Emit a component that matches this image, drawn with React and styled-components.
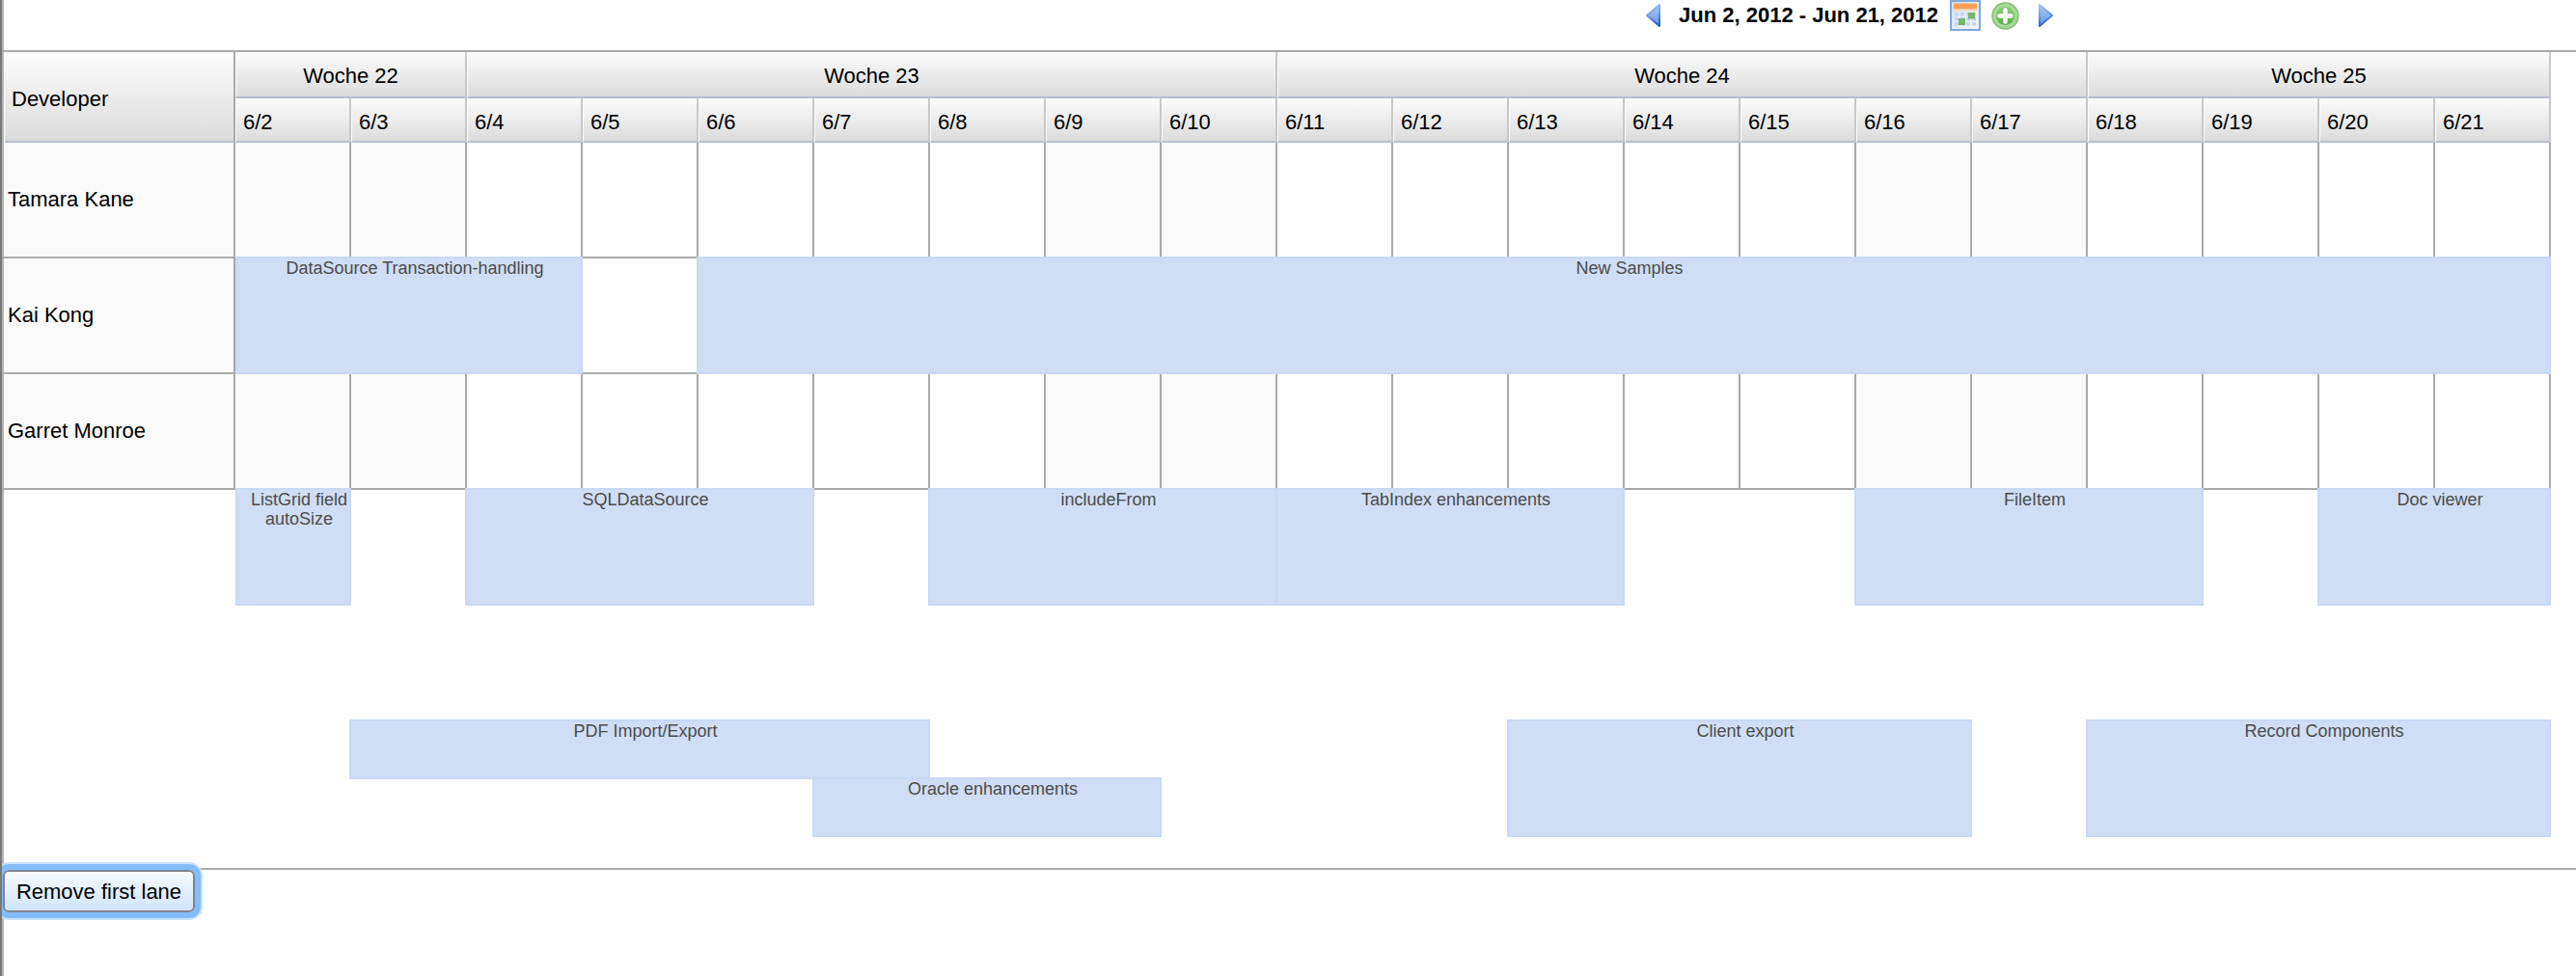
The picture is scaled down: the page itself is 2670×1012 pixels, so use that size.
import React from "react";
import styled, { createGlobalStyle } from "styled-components";

const Global = createGlobalStyle`
  html, body { margin: 0; padding: 0; background: #fff; }
  body { font-family: "Liberation Sans", Arial, sans-serif; color: #000; }
  * { box-sizing: border-box; }
`;

const Page = styled.div`
  height: 1012px;
  overflow: hidden;
  border-left: 2px solid #777;
  box-shadow: inset 2px 0 0 #b4b4b4;
  background: #fff;
`;

const Toolbar = styled.div`
  display: flex;
  align-items: center;
  height: 52px;
  padding: 0 0 20px 1704px;
`;

const Range = styled.span`
  margin: 0 12px 0 19px;
  font-size: 22px;
  font-weight: 700;
  line-height: 32px;
  white-space: nowrap;
`;

const IconSvg = styled.svg`
  display: block;
  flex: none;
  margin-left: ${(p) => p.$gap || 0}px;
`;

const Chart = styled.div`
  display: grid;
  grid-template-columns: 242px repeat(20, 120px);
  grid-template-rows: 48px 46px repeat(3, 120px) 120px 120px 60px 60px;
  border-top: 2px solid #aaa;
  border-bottom: 2px solid #aaa;
  padding-bottom: 32px;
`;

const HeaderCell = styled.div`
  display: flex;
  align-items: center;
  background: linear-gradient(#fcfcfc, #dcdcdc);
  border-left: 1px solid #fafafa;
  border-right: 2px solid #c8c8c8;
  border-bottom: 2px solid #b7bfcb;
  font-size: 22px;
  line-height: 26px;
  white-space: nowrap;
`;

const DeveloperHeader = styled(HeaderCell)`
  grid-column: 1;
  grid-row: 1 / span 2;
  margin-left: 3px;
  padding: 6px 0 0 7px;
  border-left: 0;
  border-right: 2px solid #aaa;
`;

const WeekHeader = styled(HeaderCell)`
  grid-column: ${(p) => p.$start + 2} / span ${(p) => p.$span};
  grid-row: 1;
  justify-content: center;
  padding-top: 4px;
`;

const DayHeader = styled(HeaderCell)`
  grid-column: ${(p) => p.$col + 2};
  grid-row: 2;
  padding: 6px 0 0 7px;
`;

const LaneName = styled.div`
  grid-column: 1;
  grid-row: ${(p) => p.$row + 3};
  display: flex;
  align-items: center;
  padding: 0 0 0 4px;
  background: #fafafa;
  border-left: 2px solid #b4b4b4;
  border-right: 2px solid #aaa;
  border-bottom: 2px solid #aaa;
  font-size: 22px;
  line-height: 26px;
`;

const Cell = styled.div`
  grid-column: ${(p) => p.$col + 2};
  grid-row: ${(p) => p.$row + 3};
  background: ${(p) => (p.$weekend ? "#fafafa" : "#fff")};
  border-right: 2px solid #aaa;
  border-bottom: 2px solid #aaa;
`;

const EventBox = styled.div`
  grid-column: ${(p) => p.$start + 2} / span ${(p) => p.$span};
  grid-row: ${(p) => p.$row + 3};
  margin-top: -2px;
  margin-left: ${(p) => (p.$start === 0 ? 0 : -2)}px;
  padding-left: 12px;
  background: #cfdef5;
  border: 2px solid #c8d9f3;
  color: #4b4b4b;
  font-size: 18px;
  line-height: 20px;
  text-align: center;
`;

const TallEvent = styled(EventBox)`
  grid-row: ${(p) => p.$row + 3} / span 2;
`;

const Footer = styled.div`
  display: flex;
  padding-left: 1px;
`;

const RemoveButton = styled.button`
  width: 199px;
  height: 44px;
  padding: 2px 0 0;
  border: 2px solid #7f868e;
  border-radius: 6px;
  background: linear-gradient(#f6fbff, #cfe5fe);
  box-shadow: 0 0 0 6px #83bdfc, 0 0 0 8px #c7e1fd;
  color: #000;
  font-family: "Liberation Sans", Arial, sans-serif;
  font-size: 22px;
  line-height: 26px;
  white-space: nowrap;
`;

const Arrow = ({ dir, gap, id }) => (
  <IconSvg $gap={gap} width="15" height="24" viewBox="0 0 15 24">
    <defs>
      <linearGradient id={id} x1="0" y1="0" x2="0" y2="1">
        <stop offset="0" stopColor="#b4cdf1" />
        <stop offset="1" stopColor="#5f94e2" />
      </linearGradient>
      <linearGradient id={`${id}Edge`} x1="0" y1="0" x2="0.2" y2="1">
        <stop offset="0" stopColor="#a5c3ee" />
        <stop offset="0.5" stopColor="#6f9fe6" />
        <stop offset="1" stopColor="#2462c2" />
      </linearGradient>
    </defs>
    <path
      d={dir === "left" ? "M14 1 L14 23 L1 12 Z" : "M1 1 L1 23 L14 12 Z"}
      fill={`url(#${id})`}
      stroke={`url(#${id}Edge)`}
      strokeWidth="2"
      strokeLinejoin="round"
    />
  </IconSvg>
);

const CalendarIcon = () => (
  <IconSvg width="32" height="32" viewBox="0 0 32 32">
    <defs>
      <linearGradient id="calFill" x1="0" y1="0" x2="1" y2="1">
        <stop offset="0" stopColor="#cfe0f6" />
        <stop offset="1" stopColor="#f4f8fd" />
      </linearGradient>
    </defs>
    <rect x="1" y="1" width="30" height="30" fill="url(#calFill)" stroke="#7fa8dd" strokeWidth="2" />
    <rect x="4" y="3.5" width="24" height="6" fill="#f99f5a" />
    <rect x="4" y="9.5" width="24" height="2" fill="#fbd6b5" />
    {[13, 18, 23].map((y) =>
      [5, 11, 17, 23].map((x) => (
        <rect key={`${x}-${y}`} x={x} y={y} width="4" height="3.5" fill="#c4d6ee" />
      ))
    )}
    <rect x="9" y="19" width="7" height="7" fill="#78b568" />
    <rect x="19" y="13" width="7" height="6.5" fill="#78b568" />
  </IconSvg>
);

const PlusIcon = () => (
  <IconSvg $gap={11} width="29" height="29" viewBox="0 0 29 29">
    <defs>
      <linearGradient id="plusFill" x1="0" y1="0" x2="0" y2="1">
        <stop offset="0" stopColor="#8ccf7a" />
        <stop offset="1" stopColor="#5cab4e" />
      </linearGradient>
    </defs>
    <circle cx="14.5" cy="14.5" r="13.5" fill="#a7d79a" stroke="#84be76" strokeWidth="1.5" />
    <circle cx="14.5" cy="14.5" r="9.5" fill="url(#plusFill)" />
    <path d="M14.5 8.5v12M8.5 14.5h12" stroke="#fff" strokeWidth="4.4" strokeLinecap="round" />
  </IconSvg>
);

const weeks = [
  { label: "Woche 22", start: 0, span: 2 },
  { label: "Woche 23", start: 2, span: 7 },
  { label: "Woche 24", start: 9, span: 7 },
  { label: "Woche 25", start: 16, span: 4 },
];
const days = Array.from({ length: 20 }, (_, i) => `6/${i + 2}`);
const weekend = new Set([0, 1, 7, 8, 14, 15]);
const lanes = ["Tamara Kane", "Kai Kong", "Garret Monroe"];

const events = [
  { label: "DataSource Transaction-handling", row: 1, start: 0, span: 3 },
  { label: "New Samples", row: 1, start: 4, span: 16 },
  { label: "ListGrid field autoSize", row: 3, start: 0, span: 1 },
  { label: "SQLDataSource", row: 3, start: 2, span: 3 },
  { label: "includeFrom", row: 3, start: 6, span: 3 },
  { label: "TabIndex enhancements", row: 3, start: 9, span: 3 },
  { label: "FileItem", row: 3, start: 14, span: 3 },
  { label: "Doc viewer", row: 3, start: 18, span: 2 },
  { label: "PDF Import/Export", row: 5, start: 1, span: 5 },
  { label: "Oracle enhancements", row: 6, start: 5, span: 3 },
  { label: "Client export", row: 5, rowSpan: 2, start: 11, span: 4 },
  { label: "Record Components", row: 5, rowSpan: 2, start: 16, span: 4 },
];

export default function App() {
  return (
    <Page>
      <Global />
      <Toolbar>
        <Arrow dir="left" id="arrowLeft" />
        <Range>Jun 2, 2012 - Jun 21, 2012</Range>
        <CalendarIcon />
        <PlusIcon />
        <Arrow dir="right" gap={20} id="arrowRight" />
      </Toolbar>
      <Chart>
        <DeveloperHeader>Developer</DeveloperHeader>
        {weeks.map((w) => (
          <WeekHeader key={w.label} $start={w.start} $span={w.span}>
            {w.label}
          </WeekHeader>
        ))}
        {days.map((d, i) => (
          <DayHeader key={d} $col={i}>
            {d}
          </DayHeader>
        ))}
        {lanes.map((name, row) => (
          <React.Fragment key={name}>
            <LaneName $row={row}>{name}</LaneName>
            {days.map((d, col) => (
              <Cell key={d} $row={row} $col={col} $weekend={weekend.has(col)} />
            ))}
          </React.Fragment>
        ))}
        {events.map((e) => {
          const Box = e.rowSpan ? TallEvent : EventBox;
          return (
            <Box key={e.label} $row={e.row} $start={e.start} $span={e.span}>
              {e.label}
            </Box>
          );
        })}
      </Chart>
      <Footer>
        <RemoveButton type="button">Remove first lane</RemoveButton>
      </Footer>
    </Page>
  );
}
